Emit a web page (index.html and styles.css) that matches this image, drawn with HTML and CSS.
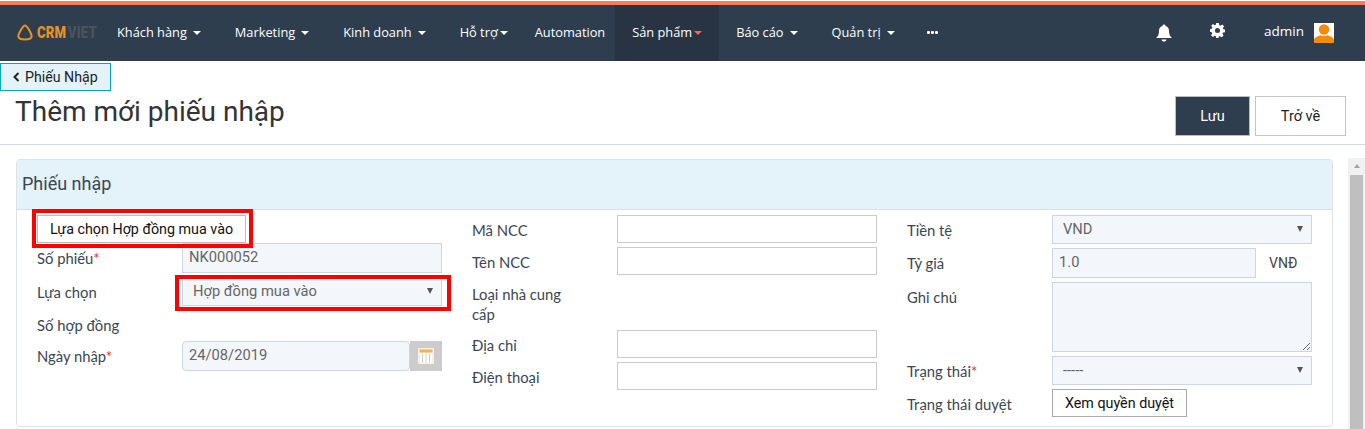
FILE: index.html
```html
<!DOCTYPE html>
<html lang="vi">
<head>
<meta charset="utf-8">
<title>Thêm mới phiếu nhập</title>
<link rel="stylesheet" href="styles.css">
</head>
<body>
<div class="app">
  <nav class="nav">
    <a class="logo" href="#">
      <svg class="logo-mark" width="16" height="17" viewBox="0 0 16 17"><path d="M8 1.500C9.500 1.500 10.500 3.200 12 5.800C13.800 8.800 15 10.800 14.600 12.800C14.200 14.800 12 15.500 8 15.500C4 15.500 1.800 14.800 1.400 12.800C1 10.800 2.200 8.800 4 5.800C5.500 3.200 6.500 1.500 8 1.500Z" fill="none" stroke="#e8921e" stroke-width="2"/></svg>
      <span class="logo-text"><span class="logo-a">CRM</span><span class="logo-b">VIET</span></span>
    </a>
    <ul class="menu">
      <li class="item"><a href="#">Khách hàng<i class="caret"></i></a></li>
      <li class="item"><a href="#">Marketing<i class="caret"></i></a></li>
      <li class="item"><a href="#">Kinh doanh<i class="caret"></i></a></li>
      <li class="item"><a href="#">Hỗ trợ<i class="caret caret-near"></i></a></li>
      <li class="item item-plain"><a href="#">Automation</a></li>
      <li class="item item-active"><a href="#">Sản phẩm<i class="caret caret-near"></i></a></li>
      <li class="item"><a href="#">Báo cáo<i class="caret"></i></a></li>
      <li class="item"><a href="#">Quản trị<i class="caret"></i></a></li>
      <li class="item"><a href="#"><span class="dots"><b></b><b></b><b></b></span></a></li>
    </ul>
    <div class="tools">
      <svg class="bell" width="16" height="18" viewBox="0 0 16 18"><path d="M8 0.500C9 0.500 9.500 1 9.500 2C12 2.500 13 4.500 13 7C13 10.500 14 12.500 16 14L0 14C2 12.500 3 10.500 3 7C3 4.500 4 2.500 6.500 2C6.500 1 7 0.500 8 0.500Z" fill="#fff"/><path d="M5.500 15.500H10.500C10.200 17 9.200 17.500 8 17.500C6.800 17.500 5.800 17 5.500 15.500Z" fill="#fff"/></svg>
      <svg class="cog" width="15" height="15" viewBox="0 0 16 16"><path fill-rule="evenodd" fill="#fff" d="M6.600 0H9.400L9.800 2.200L11.200 2.800L13.100 1.500L15 3.400L13.700 5.300L14.200 6.600L16 7V9.800L13.900 10.200L13.300 11.500L14.500 13.400L12.600 15.300L10.700 14L9.400 14.500L9 16H6.600L6.200 14.200L4.900 13.700L3.100 15L1.100 13L2.400 11.200L1.900 9.800L0 9.400V6.600L2 6.200L2.600 4.800L1.300 3L3.200 1.100L5 2.400L6.200 1.900ZM8 5.300A2.700 2.700 0 1 0 8 10.700A2.700 2.700 0 1 0 8 5.300Z"/></svg>
      <span class="user">admin</span>
      <svg class="avatar" width="20" height="20" viewBox="0 0 20 20"><rect width="20" height="20" fill="#fff"/><circle cx="10" cy="6.500" r="5.200" fill="#f58a0b"/><path d="M0 20V16.500C1 13.800 4 13 6.500 12.200C8.500 13.200 11.500 13.200 13.500 12.200C16 13 19 13.800 20 16.500V20Z" fill="#f58a0b"/></svg>
    </div>
  </nav>

  <main class="page">
    <a class="back" href="#"><svg class="back-icon" width="7" height="10" viewBox="0 0 7 10"><path d="M5.500 1L1.500 5L5.500 9" fill="none" stroke="#222" stroke-width="2"/></svg>Phiếu Nhập</a>
    <header class="head">
      <h1 class="title">Thêm mới phiếu nhập</h1>
      <div class="actions">
        <button class="btn btn-save" type="button">Lưu</button>
        <button class="btn btn-back" type="button">Trở về</button>
      </div>
    </header>

    <div class="body">
      <section class="panel">
        <h2 class="panel-head">Phiếu nhập</h2>
        <div class="cols">
          <div class="col">
            <div class="row row-tight">
              <span class="flag flag-btn"><button class="mini" type="button">Lựa chọn Hợp đồng mua vào</button></span>
            </div>
            <div class="row">
              <label class="label">Số phiếu<em>*</em></label>
              <input class="field field-ro" value="NK000052" readonly>
            </div>
            <div class="row">
              <label class="label">Lựa chọn</label>
              <span class="flag flag-sel select">
                <select class="field field-ro field-select"><option>Hợp đồng mua vào</option></select>
              </span>
            </div>
            <div class="row">
              <label class="label">Số hợp đồng</label>
            </div>
            <div class="row">
              <label class="label">Ngày nhập<em>*</em></label>
              <span class="date">
                <input class="field field-ro field-date" value="24/08/2019" readonly>
                <span class="addon">
                  <svg width="16" height="16" viewBox="0 0 16 16"><rect width="16" height="16" rx="1" fill="#f4f1e8"/><rect x="1.500" y="1.500" width="13" height="3" fill="#f3b34a"/><rect x="2" y="5.500" width="12" height="9" fill="#fff"/><path d="M4.500 5.500V14.500M8 5.500V14.500M11.500 5.500V14.500" stroke="#cfcfcf" stroke-width="1"/></svg>
                </span>
              </span>
            </div>
          </div>

          <div class="col">
            <div class="row">
              <label class="label">Mã NCC</label>
              <input class="field field-blank">
            </div>
            <div class="row">
              <label class="label">Tên NCC</label>
              <input class="field field-blank">
            </div>
            <div class="row">
              <label class="label label-wrap">Loại nhà cung cấp</label>
            </div>
            <div class="row">
              <label class="label">Địa chỉ</label>
              <input class="field field-blank">
            </div>
            <div class="row">
              <label class="label">Điện thoại</label>
              <input class="field field-blank">
            </div>
          </div>

          <div class="col">
            <div class="row">
              <label class="label">Tiền tệ</label>
              <span class="select">
                <select class="field field-ro field-select"><option>VND</option></select>
              </span>
            </div>
            <div class="row">
              <label class="label">Tỷ giá</label>
              <input class="field field-ro field-rate" value="1.0" readonly>
              <span class="unit">VNĐ</span>
            </div>
            <div class="row">
              <label class="label">Ghi chú</label>
              <textarea class="field field-ro field-area"></textarea>
            </div>
            <div class="row">
              <label class="label">Trạng thái<em>*</em></label>
              <span class="select">
                <select class="field field-ro field-select"><option>-----</option></select>
              </span>
            </div>
            <div class="row">
              <label class="label">Trạng thái duyệt</label>
              <button class="mini mini-perm" type="button">Xem quyền duyệt</button>
            </div>
          </div>
        </div>
      </section>
      <div class="scroll"><i class="scroll-up"></i><i class="scroll-thumb"></i></div>
    </div>
  </main>
</div>
</body>
</html>
```
FILE: styles.css
```css
* { box-sizing: border-box; }
html, body { margin: 0; padding: 0; height: 100%; background: #fff; overflow: hidden; }
body { font-family: "Lato", "Roboto", "Liberation Sans", sans-serif; font-size: 14px; color: #333; }
a { text-decoration: none; color: inherit; }

.app { height: 429px; overflow: hidden; padding-top: 1px; }

.nav {
  height: 60px;
  display: flex;
  align-items: stretch;
  background: #2f3e4f;
  border-top: 4px solid #f97a60;
}
.logo { width: 100px; padding: 0 0 2px 17px; display: flex; align-items: center; }
.logo-mark { flex: none; }
.logo-text {
  display: block;
  flex: none;
  margin-left: 4px;
  font-family: "Roboto", sans-serif;
  font-weight: 900;
  font-size: 16px;
  letter-spacing: .2px;
  white-space: nowrap;
  transform: scaleX(.82);
  transform-origin: left center;
}
.logo-a { color: #e8921e; }
.logo-b { color: #4b535a; margin-left: 2px; }

.menu { display: flex; list-style: none; margin: 0; padding: 0; }
.item a {
  display: flex;
  align-items: center;
  height: 100%;
  padding: 0 17px 2px;
  color: #fff;
  font-family: "Open Sans", sans-serif;
  font-size: 12.800px;
  font-weight: 500;
}
.item-plain a { padding: 0 10px 2px; }
.item-active { background: #283444; }
.item-active .caret { border-top-color: #f4694a; }
.caret {
  width: 0; height: 0;
  margin-left: 6px;
  margin-top: 2px;
  border: 4px solid transparent;
  border-top: 4px solid #fff;
  border-bottom: 0;
}
.caret-near { margin-left: 2px; }
.dots { display: flex; gap: 1px; margin-left: -2px; }
.dots b { width: 3px; height: 3px; background: #fff; border-radius: 1px; }

.tools { margin-left: auto; padding-right: 31px; display: flex; align-items: center; padding-bottom: 2px; }
.bell { margin-top: 2px; }
.cog { margin-left: 38px; margin-top: -4px; }
.user { margin-left: 39px; margin-right: 10px; margin-top: -2px; color: #fff; font-family: "Open Sans", sans-serif; font-size: 13.500px; }
.avatar { margin-top: 1px; }

.page { display: block; }
.back {
  display: flex;
  align-items: center;
  width: 111px;
  height: 28px;
  margin-top: 2px;
  padding-left: 12px;
  background: #e4f3f9;
  border: 1px solid #05a7c4;
  color: #222;
  font-family: "Roboto", sans-serif;
  font-size: 14.200px;
}
.back-icon { margin-right: 5px; }

.head { height: 54px; display: flex; justify-content: space-between; border-bottom: 1px solid #d0d8e4; padding: 0 19px 0 15px; }
.title { margin: 0; padding-top: 4px; font-family: "Roboto", sans-serif; font-weight: 400; font-size: 28px; line-height: 34px; color: #333; }
.actions { display: flex; gap: 5px; padding-top: 5px; }
.btn { height: 40px; padding: 0; font-family: "Roboto", sans-serif; font-size: 14.500px; cursor: pointer; }
.btn-save { width: 75px; background: #2f3e4f; border: 1px solid #bdbdbd; color: #fff; }
.btn-back { width: 91px; background: #fff; border: 1px solid #c4c4c4; color: #222; }

.body { display: flex; padding-left: 16px; align-items: stretch; }
.panel { width: 1317px; height: 268px; margin-top: 14px; border: 1px solid #dde2e6; border-radius: 4px; flex: none; }
.panel-head {
  margin: 0;
  height: 50px;
  padding: 0 5px 2px;
  display: flex;
  align-items: center;
  background: #e4f3f9;
  border-bottom: 1px solid #d8e2e6;
  border-radius: 3px 3px 0 0;
  font-family: "Roboto", sans-serif;
  font-size: 18px;
  font-weight: 400;
  color: #3a4653;
}
.cols { display: grid; grid-template-columns: repeat(3, 435px); padding: 5px 0 0 5px; }
.col { padding: 0 15px; }

.row { display: flex; align-items: flex-start; margin-bottom: 4px; }
.row-tight { margin-bottom: 0; }
.label { width: 145px; flex: none; min-height: 27px; padding: 5px 0 2px; line-height: 20px; font-size: 14.800px; color: #3a4653; }
.label em { color: #f0282d; font-style: normal; }
.label-wrap { padding-right: 45px; }

.field { display: block; width: 260px; margin: 0; font-family: "Roboto", sans-serif; font-size: 14.700px; outline: 0; border-radius: 0; }
.field-blank { height: 28px; background: #fff; border: 1px solid #ccc; }
.field-ro { height: 30px; padding: 0 6px 2px; background: #f3f6fa; border: 1px solid #cdd6e3; color: #666; }
.field-select { height: 29px; padding: 0 0 2px 10px; appearance: none; -webkit-appearance: none; }
.field-date { width: 228px; border-radius: 4px; }
.field-rate { width: 204px; }
.field-area { height: 70px; }

.select { position: relative; display: block; }
.select::after {
  content: "";
  position: absolute;
  right: 9px;
  top: 11px;
  border: 3.500px solid transparent;
  border-top: 6px solid #555;
  border-bottom: 0;
}

.flag { position: relative; display: block; }
.flag::before { content: ""; position: absolute; border: 4px solid #f00; pointer-events: none; z-index: 1; }
.flag-btn::before { inset: -6px -7px -5px -5px; }
.flag-sel::before { inset: -2px -9px -5px -7px; }

.mini { display: block; height: 28px; padding: 0; background: #fff; border: 1px solid #bdbdbd; color: #111; font-family: "Roboto", sans-serif; font-size: 14.300px; }
.flag-btn .mini { width: 209px; }
.mini-perm { width: 135px; border-color: #aaa; }

.date { display: flex; }
.addon { width: 32px; height: 30px; background: #ccc; display: flex; align-items: center; justify-content: center; }
.unit { margin-left: 13px; padding-top: 5px; line-height: 20px; font-family: "Roboto", sans-serif; color: #444; }

.scroll { width: 17px; margin-left: 15px; margin-top: 13px; height: 271px; background: #f1f1f1; display: flex; flex-direction: column; align-items: center; }
.scroll-up { margin-top: 6px; border: 3.500px solid transparent; border-bottom: 4px solid #a3a3a3; border-top: 0; }
.scroll-thumb { width: 13px; flex: 1; margin-top: 7px; background: #bfbfbf; }
```
